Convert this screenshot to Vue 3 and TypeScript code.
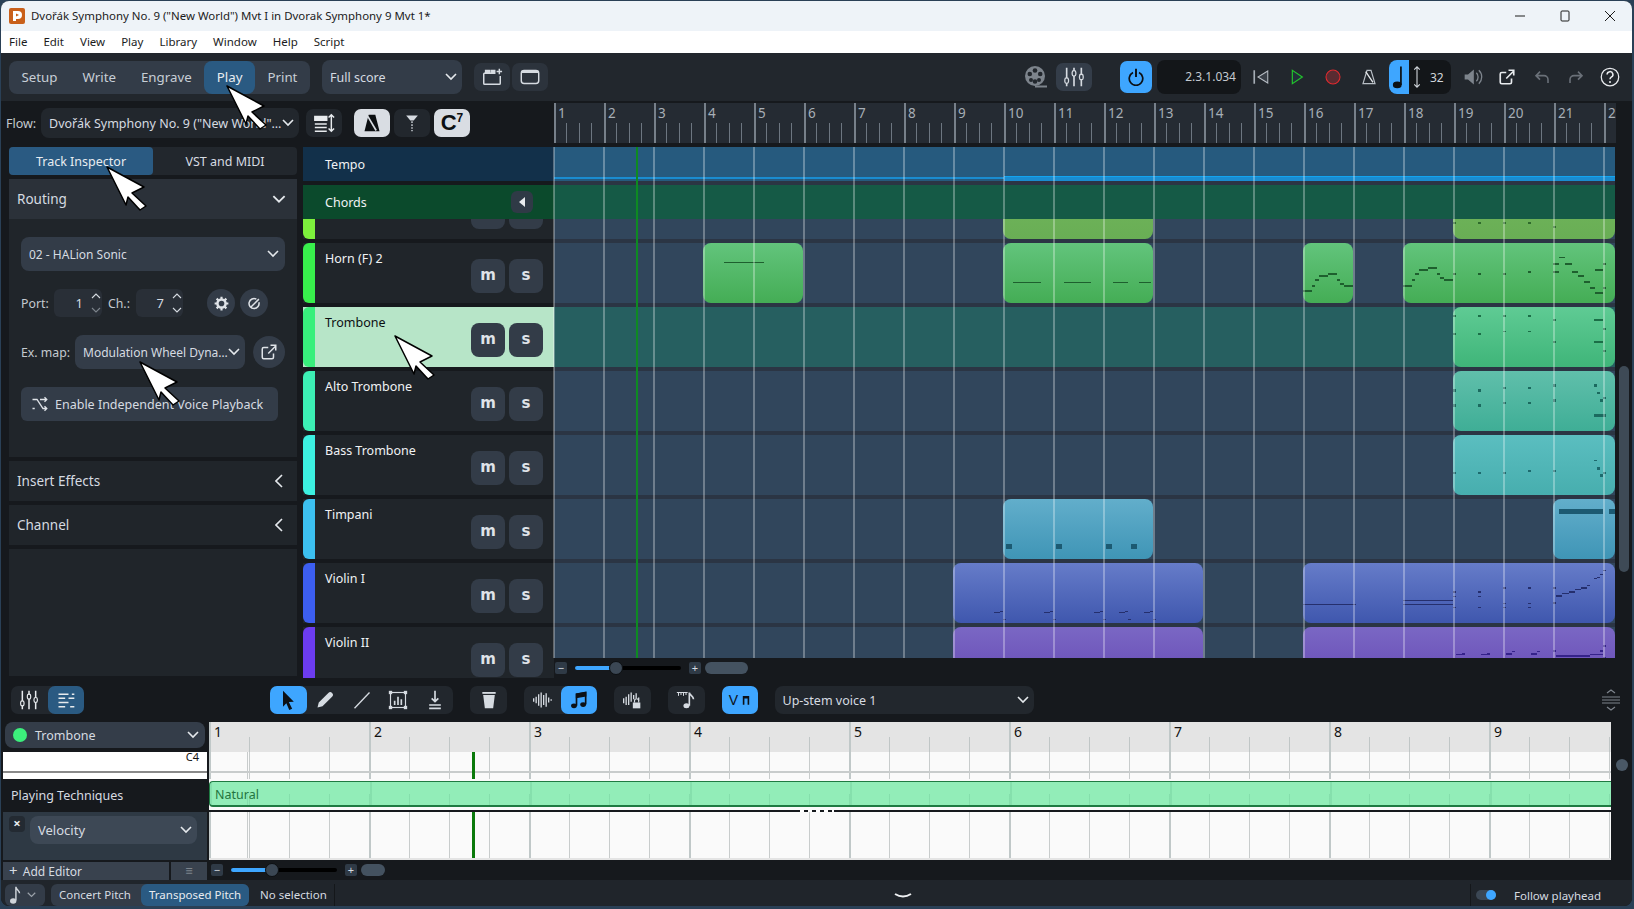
<script setup lang="ts">
type Clip = { from: number; to: number }
type Track = { name: string; color: string; grad: [string, string]; clips: Clip[]; selected?: boolean }
type N = [number, number, number, number?]
type Note = { left: number; top: number; width: number; height: number; color: string }

const menus = ['File', 'Edit', 'View', 'Play', 'Library', 'Window', 'Help', 'Script']
const modes = ['Setup', 'Write', 'Engrave', 'Play', 'Print']
const bars = Array.from({ length: 22 }, (_, i) => i + 1)
const keyBars = Array.from({ length: 9 }, (_, i) => i + 1)

const tracks: Track[] = [
  { name: '', color: '#7df03c', grad: ['#72b65c', '#69ae55'], clips: [{ from: 1003, to: 1153 }, { from: 1453, to: 1615 }] },
  { name: 'Horn (F) 2', color: '#38ef4c', grad: ['#62c47c', '#44ad55'], clips: [{ from: 703, to: 803 }, { from: 1003, to: 1153 }, { from: 1303, to: 1353 }, { from: 1403, to: 1615 }] },
  { name: 'Trombone', color: '#38ef7c', grad: ['#5fcb94', '#3fb579'], clips: [{ from: 1453, to: 1615 }], selected: true },
  { name: 'Alto Trombone', color: '#3cefb4', grad: ['#60bfab', '#3fae96'], clips: [{ from: 1453, to: 1615 }] },
  { name: 'Bass Trombone', color: '#3cf0e0', grad: ['#5bbec0', '#47aeae'], clips: [{ from: 1453, to: 1615 }] },
  { name: 'Timpani', color: '#3cc0f0', grad: ['#62aecb', '#3f95b6'], clips: [{ from: 1003, to: 1153 }, { from: 1553, to: 1615 }] },
  { name: 'Violin I', color: '#3c5ef0', grad: ['#667cc9', '#3f57ae'], clips: [{ from: 953, to: 1203 }, { from: 1303, to: 1615 }] },
  { name: 'Violin II', color: '#6c3cf0', grad: ['#7a67c4', '#6649b4'], clips: [{ from: 953, to: 1203 }, { from: 1303, to: 1615 }] },
]

function mk(ox: number, oy: number, color: string, list: N[]): Note[] {
  return list.map(([x, y, w, h]) => ({
    left: ox + x / 3 - 554,
    top: oy + y / 3 - 219,
    width: w / 3,
    height: (h ?? 6) / 3,
    color,
  }))
}

const violinRun: N[] = [132, 282, 432, 507, 582].flatMap((x): N[] => [
  [x, 367, 18, 3],
  [x + 18, 364, 9, 3],
  [x + 27, 388, 9, 3],
])

const notes: Note[] = [
  ...mk(1300, 220, '#2f6b2c', [[459, 6, 9], [534, 6, 9], [609, 6, 9], [684, 6, 9], [759, 18, 9]]),
  ...mk(1300, 220, '#1e5f2e', [
    [9, 210, 27], [36, 195, 9], [45, 177, 12], [57, 165, 27], [84, 159, 27], [111, 177, 9], [120, 189, 12], [132, 195, 27],
    [309, 195, 27], [336, 177, 9], [345, 159, 12], [357, 147, 27], [384, 141, 27], [411, 159, 9], [420, 171, 12], [432, 177, 27],
    [459, 159, 9], [534, 159, 9], [609, 159, 9], [684, 153, 9], [759, 129, 18], [759, 153, 18], [777, 112, 18, 3], [795, 129, 21],
    [816, 153, 18], [834, 165, 18], [852, 183, 18], [870, 201, 15], [885, 147, 24], [885, 216, 24], [909, 129, 9], [909, 201, 9],
  ]),
  ...mk(724, 262, '#1e5f2e', [[0, 0, 120, 3]]),
  ...mk(1013, 282, '#1e5f2e', [[0, 0, 84, 4], [153, 0, 81, 4], [300, 0, 45, 4], [378, 0, 36, 4]]),
  ...mk(1300, 220, '#1b6e47', [
    [459, 285, 9], [534, 285, 9], [609, 285, 9], [684, 285, 9], [759, 297, 9], [882, 297, 27], [909, 324, 9], [459, 339, 9],
    [534, 339, 9], [609, 334, 9, 3], [684, 334, 9, 3], [759, 363, 9], [882, 363, 27], [909, 390, 9],
  ]),
  ...mk(1300, 220, '#1b6a5f', [
    [459, 508, 9, 9], [534, 508, 9, 9], [609, 501, 9], [684, 501, 9], [759, 493, 9, 9], [882, 493, 9, 9], [891, 516, 9], [909, 531, 9],
    [900, 538, 9, 9], [459, 553, 9, 9], [534, 553, 9, 9], [609, 546, 9], [684, 546, 9], [759, 538, 9, 9], [882, 583, 36, 9],
  ]),
  ...mk(1300, 460, '#1d6a6e', [[459, 36, 9], [534, 36, 9], [609, 36, 9], [684, 30, 9], [759, 30, 9], [882, 0, 9, 3], [891, 22, 9, 9], [909, 36, 9], [900, 43, 9, 9]]),
  ...mk(1300, 460, '#1c5a72', [[777, 147, 132, 15], [927, 147, 18, 15]]),
  ...mk(950, 490, '#1c5a72', [[168, 162, 18, 15], [318, 162, 18, 15], [468, 162, 18, 15], [543, 162, 18, 15]]),
  ...mk(950, 490, '#252f6d', violinRun),
  ...mk(1300, 460, '#252f6d', [
    [9, 433, 159, 3], [309, 421, 150, 3], [309, 433, 150, 3], [459, 393, 9], [534, 393, 9], [609, 381, 9], [684, 381, 9], [759, 381, 9],
    [459, 409, 9, 3], [534, 409, 9, 3], [459, 442, 9, 3], [534, 442, 9, 3], [609, 430, 9, 3], [684, 430, 9, 3], [609, 442, 9, 3], [684, 442, 9, 3],
    [759, 426, 9], [768, 405, 18], [786, 400, 21, 3], [807, 393, 18], [825, 388, 18, 3], [843, 381, 18], [861, 376, 9, 3], [882, 355, 9, 3],
    [891, 351, 9, 3], [900, 343, 9, 3], [909, 331, 9, 3],
  ]),
  ...mk(1300, 460, '#35228a', [
    [468, 583, 18, 3], [486, 579, 9], [543, 583, 18, 3], [561, 579, 9], [618, 579, 18], [636, 574, 9, 3], [693, 579, 18], [711, 574, 9, 3],
    [759, 570, 9], [768, 585, 102, 6], [870, 583, 39, 3], [900, 570, 9], [909, 554, 9], [909, 591, 9, 3],
  ]),
]

const cursors = [
  { x: 227, y: 86 },
  { x: 107, y: 167 },
  { x: 395, y: 336 },
  { x: 140, y: 362 },
]
</script>

<template>
  <div class="screen">
    <div class="window">
      <header class="title">
        <svg class="logo" viewBox="0 0 16 16"><rect width="16" height="16" rx="2" fill="#c9601b" /><path d="M4 3h5a4 4 0 0 1 0 8H7v2H4z" fill="#fff" /><path d="M7 5.500v3l3-1.500z" fill="#c9601b" /></svg>
        <span class="title-text">Dvořák Symphony No. 9 ("New World") Mvt I in Dvorak Symphony 9 Mvt 1*</span>
        <div class="winctl">
          <svg viewBox="0 0 12 12"><path d="M1 6h10" /></svg>
          <svg viewBox="0 0 12 12"><rect x="2" y="1" width="8" height="10" rx="1" /></svg>
          <svg viewBox="0 0 12 12"><path d="M1 1l10 10M11 1L1 11" /></svg>
        </div>
      </header>
      <nav class="menu"><span v-for="m in menus" :key="m">{{ m }}</span></nav>

      <div class="toolbar">
        <div class="modes"><span v-for="m in modes" :key="m" class="mode" :class="{ on: m === 'Play' }">{{ m }}</span></div>
        <div class="select full"><span>Full score</span><svg class="chev" viewBox="0 0 12 8"><path d="M1 1l5 5 5-5" /></svg></div>
        <button class="ib dk w36">
          <svg viewBox="0 0 24 24" class="ic"><path d="M3 8v11a1 1 0 0 0 1 1h16a1 1 0 0 0 1-1v-8M3 8h12" /><path d="M5 5h4v3H5zM11 5h4v3h-4z" fill="#d6dbe1" /><path d="M20 3v6M17 6h6" /></svg>
        </button>
        <button class="ib dk w36 tight">
          <svg viewBox="0 0 24 24" class="ic"><rect x="2.500" y="5" width="19" height="14" rx="3" /><path d="M3 6.500h18" stroke-width="2" /></svg>
        </button>
        <div class="tr">
          <svg viewBox="0 0 24 24" class="t24 reel"><circle cx="11" cy="11" r="10" fill="#7d848c" /><g fill="#22272d"><circle cx="11" cy="5.500" r="2.300" /><circle cx="11" cy="16.500" r="2.300" /><circle cx="5.800" cy="9" r="2.300" /><circle cx="16.200" cy="9" r="2.300" /><circle cx="7" cy="15" r="2" /><circle cx="15" cy="15" r="2" /></g><path d="M11 21.500h12" stroke="#7d848c" stroke-width="2" /></svg>
          <button class="ib lit w36 ml8">
            <svg viewBox="0 0 24 24" class="ic big"><path d="M4 2v20M12 2v20M20 2v20" stroke-width="1.800" /><g fill="#343d49" stroke-width="1.400"><rect x="2" y="13" width="4" height="6" rx="2" /><rect x="10" y="5" width="4" height="6" rx="2" /><rect x="18" y="9" width="4" height="6" rx="2" /></g></svg>
          </button>
          <div class="power">
            <svg viewBox="0 0 24 24" class="t24 pad3"><path d="M8 6a9 9 0 1 0 8 0" fill="none" stroke="#0c1116" stroke-width="2.300" /><path d="M12 1v11" stroke="#0c1116" stroke-width="2.600" /></svg>
          </div>
          <div class="time">2.3.1.034</div>
          <div class="tg12">
            <svg viewBox="0 0 24 24" class="t24 pad0"><path d="M3 3v18" stroke="#a6adb5" stroke-width="2.200" /><path d="M21 4v16L8 12z" fill="#3a4048" stroke="#b6bcc3" stroke-width="1.400" /></svg>
            <svg viewBox="0 0 24 24" class="t24 pad"><path d="M5 2v20l15-10z" fill="#22303a" stroke="#22c32d" stroke-width="1.800" /></svg>
            <svg viewBox="0 0 24 24" class="t24 pad"><circle cx="12" cy="12" r="10.500" fill="#5a2b31" stroke="#e02a2e" stroke-width="1.600" /></svg>
            <svg viewBox="0 0 24 24" class="t24 pad"><path d="M9 2h6l6 20H3z" fill="none" stroke="#b8bec5" stroke-width="1.800" /><path d="M7 4l11 16" stroke="#e6e9ec" stroke-width="2" /></svg>
          </div>
          <div class="notegrp">
            <div class="noteblue"><svg viewBox="0 0 16 30" class="qnote"><ellipse cx="6" cy="24" rx="5" ry="3.800" fill="#0c1116" /><path d="M10.200 24V3" stroke="#0c1116" stroke-width="2" /></svg></div>
            <svg viewBox="0 0 10 28" class="updn"><path d="M5 3v22M2 6l3-3 3 3M2 22l3 3 3-3" fill="none" stroke="#d0d5da" stroke-width="1.200" /></svg>
            <span>32</span>
          </div>
          <div class="tg12 last">
            <svg viewBox="0 0 24 24" class="t24 pad1"><path d="M2 9h4l7-6v18l-7-6H2z" fill="#7d848c" /><path d="M16 7a7 7 0 0 1 0 10M19 4a11 11 0 0 1 0 16" fill="none" stroke="#7d848c" stroke-width="1.600" /></svg>
            <svg viewBox="0 0 24 24" class="t24 pad3"><path d="M18 14v5a2 2 0 0 1-2 2H5a2 2 0 0 1-2-2V8a2 2 0 0 1 2-2h6M11 14L21 4M14 3h7v7" fill="none" stroke="#e8ebee" stroke-width="2.200" /></svg>
            <svg viewBox="0 0 24 24" class="t24 pad"><path d="M9 4L3 10l6 6M3 10h12a6 6 0 0 1 6 6v5" fill="none" stroke="#6a7078" stroke-width="2.400" /></svg>
            <svg viewBox="0 0 24 24" class="t24 pad"><path d="M15 4l6 6-6 6M21 10H9a6 6 0 0 0-6 6v5" fill="none" stroke="#6a7078" stroke-width="2.400" /></svg>
            <svg viewBox="0 0 24 24" class="t24 pad1"><circle cx="12" cy="12" r="10.500" fill="none" stroke="#e8ebee" stroke-width="1.500" /><path d="M8.500 9a3.500 3.500 0 1 1 5 3.200c-1 .6-1.500 1.200-1.500 2.600" fill="none" stroke="#e8ebee" stroke-width="1.800" /><circle cx="12" cy="18" r="1.200" fill="#e8ebee" /></svg>
          </div>
        </div>
      </div>

      <div class="flowrow">
        <div class="flowctl">
          <span class="flowlabel">Flow:</span>
          <div class="select flowsel"><span class="ell">Dvořák Symphony No. 9 ("New World") Mvt I</span><svg class="chev" viewBox="0 0 12 8"><path d="M1 1l5 5 5-5" /></svg></div>
          <button class="ib dk w36 m7">
            <svg viewBox="0 0 24 24" class="ic white"><path d="M2 5h13v4H2z" fill="#e8ebee" /><path d="M2 13h13M2 17h13M2 21h13" /><path d="M20 3v18M17 6l3-3 3 3M17 18l3 3 3-3" /></svg>
          </button>
          <button class="ib light w36 m12">
            <svg viewBox="0 0 24 24" class="t24 sm"><path d="M8 2h8l5 20H3z" fill="#0c0f12" /><path d="M7 4l10 17" stroke="#d9dde3" stroke-width="2" /></svg>
          </button>
          <button class="ib dk w36 m4">
            <svg viewBox="0 0 24 24" class="t24 sm"><path d="M5 3h14l-5 6h-4z" fill="#d6dbe1" /><path d="M12 10v12" stroke="#d6dbe1" stroke-width="1.600" stroke-dasharray="2 1.500" /></svg>
          </button>
          <button class="ib light w36 m4 chord">C<sup>7</sup></button>
        </div>
        <div class="ruler">
          <div v-for="b in bars" :key="b" class="bar"><span>{{ b }}</span></div>
        </div>
      </div>

      <div class="upper">
        <aside class="inspector">
          <div class="insp-tabs"><span class="on">Track Inspector</span><span>VST and MIDI</span></div>
          <div class="panel routing">
            <div class="phead lighter"><span>Routing</span><svg class="chev big" viewBox="0 0 12 8"><path d="M1 1l5 5 5-5" /></svg></div>
            <div class="pbody">
              <div class="select rsel"><span>02 - HALion Sonic</span><svg class="chev" viewBox="0 0 12 8"><path d="M1 1l5 5 5-5" /></svg></div>
              <div class="portrow">
                <span class="lbl lport">Port:</span>
                <div class="spin"><b>1</b><i><svg viewBox="0 0 12 8"><path d="M2 6l4-4 4 4" /></svg><svg viewBox="0 0 12 8" class="dim"><path d="M2 2l4 4 4-4" /></svg></i></div>
                <span class="lbl ch">Ch.:</span>
                <div class="spin s2"><b>7</b><i><svg viewBox="0 0 12 8"><path d="M2 6l4-4 4 4" /></svg><svg viewBox="0 0 12 8"><path d="M2 2l4 4 4-4" /></svg></i></div>
                <div class="round r1"><svg viewBox="0 0 24 24" class="gear"><circle cx="12" cy="12" r="6.500" fill="none" stroke="#dfe3e8" stroke-width="4" /><path d="M12 1v5M12 18v5M1 12h5M18 12h5M4.200 4.200l3.500 3.500M16.300 16.300l3.500 3.500M4.200 19.800l3.500-3.500M16.300 7.700l3.500-3.500" stroke="#dfe3e8" stroke-width="3.400" /></svg></div>
                <div class="round r2"><svg viewBox="0 0 24 24" class="gear"><path d="M19 10a8 8 0 1 1-4-5M6 18L19 5" fill="none" stroke="#dfe3e8" stroke-width="2.400" /></svg></div>
              </div>
              <div class="maprow">
                <span class="lbl lmap">Ex. map:</span>
                <div class="select msel"><span class="ell">Modulation Wheel Dynamics</span><svg class="chev" viewBox="0 0 12 8"><path d="M1 1l5 5 5-5" /></svg></div>
                <div class="round r3"><svg viewBox="0 0 24 24" class="gear big"><path d="M18 14v5a2 2 0 0 1-2 2H5a2 2 0 0 1-2-2V8a2 2 0 0 1 2-2h6M11 14L21 4M14 3h7v7" fill="none" stroke="#dfe3e8" stroke-width="2" /></svg></div>
              </div>
              <div class="indep">
                <svg viewBox="0 0 24 24" class="gear big"><path d="M2 6h6l8 12h5M2 18h3M12 6h9M18 3l3 3-3 3M18 15l3 3-3 3" fill="none" stroke="#dfe3e8" stroke-width="1.800" /></svg>
                <span>Enable Independent Voice Playback</span>
              </div>
            </div>
          </div>
          <div class="panel"><div class="phead closed"><span>Insert Effects</span><svg class="chev left" viewBox="0 0 8 14"><path d="M7 1L1 7l6 6" /></svg></div></div>
          <div class="panel"><div class="phead closed"><span>Channel</span><svg class="chev left" viewBox="0 0 8 14"><path d="M7 1L1 7l6 6" /></svg></div></div>
          <div class="panel rest"></div>
        </aside>

        <section class="arranger">
          <div class="arr-main">
            <div class="row fixed">
              <div class="head tempo"><span class="name">Tempo</span></div>
              <div class="lane tempo"><div class="tline thin"></div><div class="tline thick"></div></div>
            </div>
            <div class="row fixed chordrow">
              <div class="head chords"><span class="name">Chords</span><button class="collapse"><svg viewBox="0 0 8 10"><path d="M7 0v10L1 5z" fill="#e8ebee" /></svg></button></div>
              <div class="lane chords"></div>
            </div>
            <div class="tracks">
              <div class="tracks-inner">
                <div v-for="(t, ti) in tracks" :key="ti" class="row">
                  <div class="head" :class="{ sel: t.selected }">
                    <i class="tab" :style="{ background: t.color }"></i>
                    <span v-if="t.name" class="name">{{ t.name }}</span>
                    <div class="ms"><b>m</b><b>s</b></div>
                  </div>
                  <div class="lane" :class="{ sel: t.selected }">
                    <div
                      v-for="c in t.clips"
                      :key="c.from"
                      class="clip"
                      :style="{ left: c.from - 554 + 'px', width: c.to - c.from + 'px', background: `linear-gradient(${t.grad[0]},${t.grad[1]})` }"
                    ></div>
                  </div>
                </div>
              </div>
            </div>
          </div>
          <div class="vscroll"><i></i></div>
          <div class="notes">
            <i v-for="(n, i) in notes" :key="i" :style="{ left: n.left + 'px', top: n.top + 'px', width: n.width + 'px', height: n.height + 'px', background: n.color }"></i>
          </div>
          <div class="barlines"></div>
          <div class="playhead"></div>
          <div class="hscroll top">
            <span class="pm">−</span>
            <div class="slider"><i class="fill"></i><i class="knob"></i></div>
            <span class="pm">+</span>
            <i class="pill"></i>
          </div>
        </section>
      </div>

      <div class="toolbar2">
        <div class="grp g1">
          <span class="tb"><svg viewBox="0 0 24 24" class="ic white"><path d="M4 1v22M12 1v22M20 1v22" stroke-width="1.800" /><g fill="#22272d" stroke-width="1.400"><rect x="2" y="13" width="4" height="6" rx="2" /><rect x="10" y="5" width="4" height="6" rx="2" /><rect x="18" y="9" width="4" height="6" rx="2" /></g></svg></span>
          <span class="tb act"><svg viewBox="0 0 24 24" class="ic white"><path d="M3 5h12M19 5h3M3 10h8M15 10h7M3 15h12M3 20h8M17 20h5" stroke-width="1.800" /></svg></span>
        </div>
        <div class="grp g2">
          <span class="tb blue"><svg viewBox="0 0 24 24" class="ic"><path d="M6 1l13 13-6 .5 4 8-3.500 1.500-3.500-8L6 20z" fill="#0c1116" stroke="none" /></svg></span>
          <span class="tb"><svg viewBox="0 0 24 24" class="ic"><path d="M3 21l1.500-6L16 3.500a2.100 2.100 0 0 1 4.500 4.500L9 19.500z" fill="#d6dbe1" stroke="none" /></svg></span>
          <span class="tb"><svg viewBox="0 0 24 24" class="ic"><path d="M3 22L21 3" /></svg></span>
          <span class="tb"><svg viewBox="0 0 24 24" class="ic"><rect x="3" y="3" width="18" height="18" stroke-width="1.400" /><path d="M8 18v-5M12 18V8M16 18v-7" stroke-width="2" /><g fill="#d6dbe1" stroke="none"><rect x="1" y="1" width="4" height="4" /><rect x="19" y="1" width="4" height="4" /><rect x="1" y="19" width="4" height="4" /><rect x="19" y="19" width="4" height="4" /></g></svg></span>
          <span class="tb"><svg viewBox="0 0 24 24" class="ic"><path d="M12 1v13M8 10l4 4 4-4M5 18h14M5 22h14" stroke-width="2" /></svg></span>
        </div>
        <div class="grp single"><span class="tb"><svg viewBox="0 0 24 24" class="ic"><path d="M5 6h14l-2 16H7z" fill="#d6dbe1" stroke="none" /><path d="M4 3.500h16" stroke-width="2.200" /></svg></span></div>
        <div class="grp g3">
          <span class="tb"><svg viewBox="0 0 24 24" class="ic"><path d="M2 10v4M5 8v8M8 5v14M11 3v18M14 6v12M17 4v16M20 9v6M23 11v2" stroke-width="1.600" /></svg></span>
          <span class="tb blue"><svg viewBox="0 0 24 24" class="ic"><path d="M9 19V5l11-2v14" stroke="#0c1116" stroke-width="2" /><path d="M9 5l11-2v4L9 9z" fill="#0c1116" stroke="#0c1116" /><ellipse cx="6" cy="19" rx="3.500" ry="2.800" fill="#0c1116" stroke="none" /><ellipse cx="17" cy="17.500" rx="3.500" ry="2.800" fill="#0c1116" stroke="none" /></svg></span>
        </div>
        <div class="grp single"><span class="tb"><svg viewBox="0 0 24 24" class="ic"><path d="M2 10v6M5 8v10M8 5v13M11 3v11M14 6v5M17 4v6M20 9v4" stroke-width="1.600" /><rect x="13" y="15" width="9" height="7" fill="#d6dbe1" stroke="none" /><path d="M15 15v-2a2.500 2.500 0 0 1 5 0v2" stroke-width="1.400" /></svg></span></div>
        <div class="grp single"><span class="tb"><svg viewBox="0 0 24 24" class="ic"><path d="M1 3h13M3 3v4M6 3v3M9 3v4M12 3v3" stroke-width="1.200" /><path d="M16 19V3c0 3 5 4 5 8" stroke-width="2" /><ellipse cx="12.500" cy="19" rx="3.600" ry="3" fill="#d6dbe1" stroke="none" /></svg></span></div>
        <div class="grp single vblue"><span class="vv">V</span><svg viewBox="0 0 10 12" class="vn"><path d="M1 12V1h8v11H7V4H3v8z" fill="#0c1116" /></svg></div>
        <div class="select voice"><span>Up-stem voice 1</span><svg class="chev" viewBox="0 0 12 8"><path d="M1 1l5 5 5-5" /></svg></div>
        <svg viewBox="0 0 20 22" class="stack"><path d="M6 4l4-3 4 3M6 18l4 3 4-3M1 8h18M1 11h18M1 14h18" fill="none" stroke="#7d848c" stroke-width="1.200" /></svg>
      </div>

      <div class="keyed">
        <div class="kleft">
          <div class="select ktrack"><i class="dot"></i><span>Trombone</span><svg class="chev" viewBox="0 0 12 8"><path d="M1 1l5 5 5-5" /></svg></div>
          <div class="keystrip"><span>C4</span></div>
          <div class="ptlabel">Playing Techniques</div>
          <div class="velpanel">
            <span class="xbtn">×</span>
            <div class="select velsel"><span>Velocity</span><svg class="chev" viewBox="0 0 12 8"><path d="M1 1l5 5 5-5" /></svg></div>
          </div>
          <div class="addrow">
            <div class="add"><b>+</b> Add Editor</div>
            <div class="addmenu">≡</div>
          </div>
        </div>
        <div class="kgrid">
          <div class="kruler"><div v-for="b in keyBars" :key="b" class="kbar"><span>{{ b }}</span></div></div>
          <div class="knotes gridbg"><i class="pianoline"></i><i class="kplay"></i></div>
          <div class="ptwrap">
            <div class="natural"><span>Natural</span><i class="natgrid"></i></div>
          </div>
          <div class="divider"><i></i></div>
          <div class="kvel gridbg"><i class="kplay"></i></div>
          <div class="hscroll lower">
            <span class="pm">−</span>
            <div class="slider"><i class="fill"></i><i class="knob"></i></div>
            <span class="pm">+</span>
            <i class="pill"></i>
          </div>
        </div>
        <div class="kright"><i></i></div>
      </div>

      <footer class="status">
        <div class="notebtn">
          <svg viewBox="0 0 12 22" class="snote"><path d="M7 17V2c0 3 4 4 4 7" fill="none" stroke="#cfd4da" stroke-width="1.600" /><ellipse cx="4" cy="17.500" rx="3.500" ry="3" fill="#cfd4da" /></svg>
          <svg class="chev tiny" viewBox="0 0 12 8"><path d="M1 1l5 5 5-5" /></svg>
        </div>
        <div class="pitch"><span>Concert Pitch</span><span class="on">Transposed Pitch</span></div>
        <span class="nosel">No selection</span>
        <svg viewBox="0 0 18 6" class="handle"><path d="M1 1q8 5 16 0" fill="none" stroke="#eef0f2" stroke-width="2" /></svg>
        <div class="follow">
          <div class="toggle"><i></i></div>
          <span>Follow playhead</span>
        </div>
      </footer>
    </div>

    <svg v-for="(c, i) in cursors" :key="i" class="cursor" viewBox="-2 -2 44 48" :style="{ left: c.x - 2 + 'px', top: c.y - 2 + 'px' }">
      <path d="M0 0L37 20 25 26 39 39 33 43 21 30 19 38z" fill="#fff" stroke="#000" stroke-width="1.500" stroke-linejoin="round" />
    </svg>
  </div>
</template>

<style>
html, body { margin: 0; overflow: hidden; background: #24394f; }
</style>

<style scoped>
* { box-sizing: border-box; }
.screen { position: relative; width: 1634px; height: 909px; overflow: hidden; background: #2a4056; font-family: "Noto Sans", "Open Sans", sans-serif; font-size: 12.500px; color: #d6dbe1; }
.window { position: relative; margin: 1px 2px 0 1px; height: 905px; background: #16191d; border-radius: 8px; overflow: hidden; display: flex; flex-direction: column; }
button { border: 0; padding: 0; font: inherit; color: inherit; }
svg { display: block; }
.ell { overflow: hidden; text-overflow: ellipsis; white-space: nowrap; flex: 1; min-width: 0; }

.title { height: 30px; background: #eef3f8; display: flex; align-items: center; color: #1c1c1c; font-size: 11.450px; flex: none; }
.logo { width: 16px; height: 16px; margin-left: 8px; }
.title-text { margin: -2px 0 0 6px; }
.winctl { margin-left: auto; display: flex; gap: 33px; margin-right: 16px; }
.winctl svg { width: 12px; height: 12px; fill: none; stroke: #1c1c1c; stroke-width: 1; }
.menu { height: 22px; background: #fff; display: flex; align-items: center; color: #1c1c1c; font-size: 11.500px; gap: 16px; padding: 0 0 2px 8px; flex: none; }

.toolbar { height: 48px; background: #22272d; display: flex; align-items: center; flex: none; padding-left: 8px; }
.modes { width: 301px; height: 33px; background: #333c48; border-radius: 8px; display: flex; }
.mode { height: 33px; line-height: 33px; font-size: 13.300px; padding: 0 12.500px; border-radius: 8px; color: #c7ced6; }
.mode.on { background: #2a5a82; color: #e8ecf0; }
.select { background: #333c48; border-radius: 8px; display: flex; align-items: center; color: #d6dbe1; }
.full { width: 140px; height: 34px; margin-left: 12px; padding: 0 5px 0 8px; justify-content: space-between; }
.chev { width: 12px; height: 8px; fill: none; stroke: #e4e8ec; stroke-width: 1.600; flex: none; }
.chev.big { width: 14px; height: 9px; }
.chev.left { width: 8px; height: 14px; }
.chev.tiny { width: 9px; height: 6px; stroke: #9aa1a9; }
.ib { display: flex; align-items: center; justify-content: center; border-radius: 7px; height: 28px; }
.w36 { width: 36px; }
.dk { background: #2c333c; margin-left: 12px; }
.tight { margin-left: 2px; }
.lit { background: #343d49; }
.light { background: #d9dde3; color: #0c0f12; }
.ic { width: 22px; height: 22px; fill: none; stroke: #d6dbe1; stroke-width: 1.600; }
.ic.white { stroke: #e8ebee; }
.t24 { width: 24px; height: 24px; flex: none; }
.t24.sm { width: 20px; height: 20px; }
.t24.pad { padding: 4px; }
.t24.pad0 { padding: 3px; }
.t24.pad1 { padding: 2px; }
.t24.pad3 { padding: 3px; }
.tr { margin-left: auto; display: flex; align-items: center; margin-right: 10px; }
.ml8 { margin-left: 8px; }
.power { width: 32px; height: 32px; background: #3ea6ff; border-radius: 7px; margin-left: 28px; display: flex; align-items: center; justify-content: center; }
.time { width: 84px; height: 34px; background: #131619; border-radius: 8px; margin-left: 5px; line-height: 34px; text-align: right; padding-right: 5px; font-size: 12px; color: #c4cad0; }
.tg12 { display: flex; gap: 12px; margin-left: 8px; }
.tg12.last { gap: 10.250px; margin-left: 10px; }
.notegrp { width: 62px; height: 34px; background: #131619; border-radius: 8px; margin-left: 8px; display: flex; align-items: center; overflow: hidden; font-size: 12px; color: #d0d5da; }
.noteblue { width: 20px; height: 34px; background: #3ea6ff; display: flex; align-items: center; justify-content: center; }
.qnote { width: 14px; height: 28px; }
.updn { width: 10px; height: 26px; margin: 0 8px 0 3px; }

.flowrow { height: 46px; display: flex; flex: none; }
.flowctl { width: 553px; display: flex; align-items: center; padding-bottom: 2px; }
.flowlabel { margin-left: 5px; width: 35px; font-size: 12.500px; color: #c4cad0; flex: none; }
.flowsel { width: 258px; height: 30px; padding: 0 5px 0 8px; background: #22272d; }
.m7 { margin-left: 7px; background: #22272d; }
.m12 { margin-left: 12px; }
.m4 { margin-left: 4px; }
.m4.dk { background: #22272d; }
.chord { font-family: "Liberation Sans", sans-serif; font-weight: 700; font-size: 22px; }
.chord sup { font-size: 12px; margin-top: -10px; }
.ruler { margin-top: 2px; width: 1062px; height: 40px; background: #252b33; display: flex; overflow: hidden; flex: none; }
.bar { flex: 0 0 50px; height: 40px; border-left: 2px solid #77808a; font-size: 13.500px; color: #a7aeb6; padding-left: 2px; line-height: 20px; background: linear-gradient(#6d7681, #6d7681) 10px 20px / 1px 20px no-repeat, linear-gradient(#6d7681, #6d7681) 23px 20px / 1px 20px no-repeat, linear-gradient(#6d7681, #6d7681) 35px 20px / 1px 20px no-repeat; }

.upper { height: 533px; display: flex; flex: none; }
.inspector { width: 302px; padding-left: 8px; display: flex; flex-direction: column; gap: 4px; flex: none; }
.insp-tabs { width: 288px; height: 28px; background: #22272d; border-radius: 4px; display: flex; flex: none; }
.insp-tabs span { flex: 1; text-align: center; line-height: 29px; border-radius: 4px; color: #d6dbe1; }
.insp-tabs .on { flex: 0 0 144px; background: #2a5a82; color: #e8ecf0; }
.panel { width: 288px; background: #20252a; flex: none; }
.routing { height: 278px; }
.rest { height: 127px; }
.phead { height: 40px; display: flex; justify-content: space-between; align-items: center; padding: 0 11px 0 8px; font-size: 13.500px; color: #d6dbe1; }
.phead.closed { padding-right: 14px; }
.phead.lighter { background: #2b3139; }
.pbody { padding: 18px 12px 0; }
.rsel { width: 264px; height: 34px; padding: 0 6px 0 8px; justify-content: space-between; font-size: 12px; }
.portrow { display: flex; align-items: center; height: 28px; margin-top: 18px; }
.lbl { font-size: 12.300px; color: #c4cad0; white-space: nowrap; flex: none; }
.lport { width: 33px; }
.lmap { width: 54px; }
.spin { width: 48px; height: 28px; background: #292f37; border-radius: 6px; display: flex; justify-content: flex-end; font-size: 13px; flex: none; }
.spin b { font-weight: 400; line-height: 28px; margin-right: 7px; }
.spin i { width: 12px; display: flex; flex-direction: column; justify-content: space-around; }
.spin svg { width: 12px; height: 8px; fill: none; stroke: #d6dbe1; stroke-width: 1.100; }
.spin svg.dim { stroke: #7d848c; }
.ch { margin-left: 6px; width: 28px; }
.s2 { width: 47px; }
.round { width: 28px; height: 28px; border-radius: 50%; background: #333c48; display: flex; align-items: center; justify-content: center; flex: none; }
.r1 { margin-left: 24px; }
.r2 { margin-left: 5px; }
.r3 { width: 32px; height: 32px; margin-left: 8px; }
.gear { width: 15px; height: 15px; }
.gear.big { width: 18px; height: 18px; flex: none; }
.maprow { display: flex; align-items: center; height: 34px; margin-top: 18px; }
.msel { width: 170px; height: 34px; padding: 0 5px 0 8px; font-size: 12px; flex: none; }
.indep { width: 257px; height: 34px; margin-top: 18px; background: #333c48; border-radius: 6px; display: flex; align-items: center; gap: 6px; padding-left: 10px; font-size: 12.500px; white-space: nowrap; }

.arranger { position: relative; width: 1329px; display: flex; height: 533px; flex: none; }
.arr-main { width: 1312px; display: flex; flex-direction: column; }
.row { display: flex; height: 64px; flex: none; background: linear-gradient(to right, transparent 251px, #2b3544 251px); }
.row.fixed { height: 38px; }
.row.chordrow { height: 34px; }
.head { position: relative; width: 251px; height: 60px; background: #20252a; flex: none; }
.fixed .head, .fixed .lane { height: 34px; }
.head .name { position: absolute; left: 22px; top: 7px; font-size: 12.500px; color: #f0f2f4; white-space: nowrap; line-height: 18px; }
.fixed .name { top: 9px; }
.head.tempo { background: #12304a; }
.head.chords { background: #0b4a2c; }
.head.sel { background: #b7e5c8; }
.head.sel .name { color: #0c0f12; }
.tab { position: absolute; left: 0; top: 0; bottom: 0; width: 12px; border-radius: 6px 0 0 6px; }
.ms { position: absolute; left: 168px; top: 16px; display: flex; gap: 4px; }
.ms b { width: 34px; height: 34px; background: #333c48; border-radius: 8px; text-align: center; line-height: 33px; font-family: "DejaVu Sans", sans-serif; font-size: 15px; font-weight: 700; color: #dfe3e8; }
.collapse { position: absolute; left: 208px; top: 6px; width: 22px; height: 22px; border-radius: 6px; background: #2f3a46; display: flex; align-items: center; justify-content: center; }
.collapse svg { width: 8px; height: 10px; }
.lane { position: relative; width: 1061px; height: 60px; background: #31465c; flex: none; }
.lane.sel { background: #265f60; }
.lane.tempo { background: #265a7e; }
.lane.chords { background: #155a46; }
.tline { position: absolute; background: #1a8cd0; }
.thin { left: 0; width: 450px; top: 30px; height: 2px; }
.thick { left: 450px; right: 0; top: 29px; height: 5px; border-top: 1px solid #12a4f0; }
.tracks { height: 459px; overflow: hidden; flex: none; }
.tracks-inner { margin-top: -40px; }
.clip { position: absolute; top: 0; bottom: 0; border-radius: 8px; }
.vscroll { width: 17px; height: 533px; padding: 219px 3px 0 4px; }
.vscroll i { display: block; width: 10px; height: 206px; background: #3e4a56; border-radius: 5px; }
.notes { position: absolute; left: 251px; top: 72px; width: 1061px; height: 439px; overflow: hidden; pointer-events: none; }
.notes i { position: absolute; }
.barlines { position: absolute; left: 250px; top: 0; width: 1062px; height: 511px; background: repeating-linear-gradient(90deg, rgba(255, 255, 255, .3) 0 2px, transparent 2px 50px); }
.playhead { position: absolute; left: 333px; top: 0; width: 2px; height: 511px; background: #0e8a22; }
.hscroll { display: flex; align-items: center; background: #16191d; }
.hscroll.top { position: absolute; left: 251px; top: 511px; width: 1078px; height: 22px; padding: 0 0 2px 1px; }
.pm { width: 12px; height: 12px; background: #2f3a46; border-radius: 2px; text-align: center; font-size: 11px; line-height: 11px; color: #d6dbe1; flex: none; }
.slider { position: relative; width: 106px; height: 4px; margin: 0 8px; background: #000; border-radius: 2px; flex: none; }
.slider .fill { position: absolute; left: 0; top: 0; width: 40px; height: 4px; background: #3ea6ff; border-radius: 2px; }
.slider .knob { position: absolute; left: 34px; top: -5px; width: 14px; height: 14px; border-radius: 50%; background: #3b4754; border: 1px solid #0c0f12; }
.pill { width: 43px; height: 12px; margin-left: 4px; background: #445260; border-radius: 6px; flex: none; }

.toolbar2 { height: 42px; padding: 6px 0 0 10px; display: flex; flex: none; }
.grp { height: 28px; background: #22272d; border-radius: 7px; display: flex; flex: none; }
.tb { width: 36.700px; height: 28px; border-radius: 7px; display: flex; align-items: center; justify-content: center; }
.tb .ic { width: 20px; height: 20px; }
.tb.act { background: #2a5a82; }
.tb.blue { background: #3ea6ff; }
.g1 { width: 73px; }
.g2 { margin-left: 186px; }
.single { margin-left: 17px; }
.g3 { margin-left: 17px; }
.g3 .tb { width: 36.500px; }
.vblue { width: 36px; background: #3ea6ff; align-items: center; justify-content: center; gap: 4px; color: #0c1116; font-size: 14px; }
.vv { font-family: "Liberation Sans", sans-serif; }
.vn { width: 8px; height: 10px; }
.voice { width: 259px; height: 28px; margin-left: 17px; padding: 0 5px 0 8px; background: #22272d; justify-content: space-between; font-size: 12.500px; }
.stack { width: 20px; height: 22px; margin: 3px 0 0 567px; }

.keyed { height: 158px; display: flex; flex: none; }
.kleft { width: 208px; padding-left: 2px; flex: none; }
.ktrack { width: 200px; height: 26px; margin: 0 2px; padding: 0 6px 0 8px; background: #343d49; }
.ktrack span { flex: 1; font-size: 12.500px; }
.dot { width: 14px; height: 14px; border-radius: 50%; background: #3cef7c; margin-right: 8px; flex: none; }
.keystrip { position: relative; margin-top: 4px; width: 204px; height: 27px; overflow: hidden; background: linear-gradient(#fff 0 19px, #8a8a8a 19px 21px, #fff 21px); color: #111; font-size: 11px; text-align: right; padding-right: 8px; line-height: 9px; }
.ptlabel { width: 204px; height: 33px; padding-left: 8px; line-height: 33px; color: #d6dbe1; font-size: 12.500px; }
.velpanel { position: relative; width: 204px; height: 48px; background: #2e3944; }
.xbtn { position: absolute; left: 6px; top: 4px; width: 16px; height: 16px; border-radius: 4px; background: #232a32; font-size: 13px; line-height: 14px; text-align: center; font-weight: 700; color: #e8ebee; }
.velsel { position: absolute; left: 27px; top: 4px; width: 167px; height: 28px; padding: 0 5px 0 8px; background: #3d4855; justify-content: space-between; font-size: 13px; }
.addrow { display: flex; height: 20px; padding-top: 2px; gap: 2px; width: 204px; }
.add { width: 166px; background: #39424e; font-size: 12px; line-height: 17px; padding-left: 6px; color: #d6dbe1; white-space: nowrap; }
.add b { font-weight: 400; font-size: 15px; margin-right: 2px; }
.addmenu { flex: 1; background: #39424e; text-align: center; color: #7d848c; line-height: 17px; }
.kgrid { width: 1402px; flex: none; }
.kruler { display: flex; height: 30px; background: #e4e4e4; }
.kbar { flex: 0 0 160px; height: 30px; border-left: 2px solid #c0c8c8; padding-left: 3px; color: #111; font-size: 14px; line-height: 19px; background: linear-gradient(#c0c6c6, #c0c6c6) 38px 15px / 1px 15px no-repeat, linear-gradient(#c0c6c6, #c0c6c6) 78px 15px / 1px 15px no-repeat, linear-gradient(#c0c6c6, #c0c6c6) 118px 15px / 1px 15px no-repeat; }
.kbar:last-child { flex-basis: 122px; }
.gridbg { position: relative; background-color: #fafafa; background-image: repeating-linear-gradient(90deg, #c0c8c8 0 2px, transparent 2px 160px), repeating-linear-gradient(90deg, #c8cccc 0 1px, transparent 1px 40px); background-position: 0 0, 40px 0; }
.knotes { height: 27px; }
.pianoline { position: absolute; left: 0; right: 0; top: 19px; height: 2px; background: #c8cccc; }
.kplay { position: absolute; left: 263px; top: 0; bottom: 0; width: 3px; background: #0b7a0b; }
.ptwrap { height: 31px; padding: 2px 0 3px; background: #fafafa; }
.natural { position: relative; height: 26px; background: #92edb8; border: 1px solid #1f7a42; border-bottom-width: 2px; border-radius: 4px 0 0 4px; border-right: 0; color: #23753f; padding-left: 5px; line-height: 25px; font-size: 12.500px; background-image: repeating-linear-gradient(90deg, rgba(40, 130, 90, .12) 0 2px, transparent 2px 160px); }
.natgrid { position: absolute; left: -1px; right: 0; top: 12px; bottom: 0; background-image: repeating-linear-gradient(90deg, rgba(40, 120, 80, .12) 0 1px, transparent 1px 40px); background-position: 40px 0; }
.divider { position: relative; height: 2px; background: #16191d; }
.divider i { position: absolute; left: 591px; top: 0; width: 34px; height: 3px; background: repeating-linear-gradient(90deg, #fff 0 4px, #16191d 4px 8px); }
.kvel { height: 48px; border-bottom: 2px solid #e4e4e4; }
.hscroll.lower { height: 20px; padding-left: 2px; }
.hscroll.lower .fill { width: 39px; }
.hscroll.lower .pill { width: 24px; }
.kright { flex: 1; padding: 37px 0 0 5px; }
.kright i { display: block; width: 12px; height: 12px; border-radius: 50%; background: #4a5866; }

.status { position: relative; height: 26px; background: #20252b; display: flex; align-items: flex-end; flex: none; font-size: 11.500px; }
.notebtn { width: 40px; height: 22px; margin-left: 4px; background: #333c48; border-radius: 6px; display: flex; align-items: center; padding-left: 4px; gap: 6px; }
.snote { width: 12px; height: 20px; }
.pitch { display: flex; margin-left: 6px; width: 198px; height: 22px; background: #333c48; border-radius: 6px; line-height: 22px; }
.pitch span { padding-left: 8px; width: 90px; white-space: nowrap; }
.pitch .on { width: 108px; background: #2a5a82; border-radius: 6px; color: #e8ecf0; }
.nosel { margin-left: 11px; width: 75px; line-height: 22px; white-space: nowrap; border-right: 1px solid #14171a; height: 22px; }
.handle { position: absolute; left: 893px; top: 13px; width: 18px; height: 6px; }
.follow { position: absolute; left: 1469px; top: 4px; bottom: 0; width: 162px; border-left: 1px solid #14171a; display: flex; align-items: center; padding-left: 5px; gap: 18px; }
.toggle { position: relative; width: 20px; height: 10px; background: #3b4754; border-radius: 5px; }
.toggle i { position: absolute; right: 0; top: 0; width: 10px; height: 10px; border-radius: 50%; background: #3ea6ff; }

.cursor { position: absolute; width: 44px; height: 48px; pointer-events: none; }
</style>
